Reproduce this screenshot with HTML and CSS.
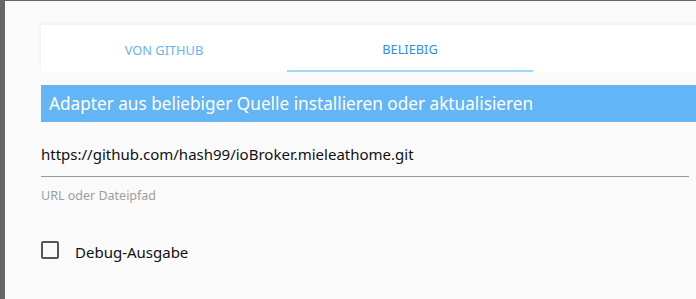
FILE: index.html
```html
<!DOCTYPE html>
<html lang="de">
<head>
    <meta charset="UTF-8">
    <meta name="viewport" content="width=device-width, initial-scale=1.0">
    <title>Adapter installieren</title>
    <link rel="stylesheet" href="styles.css">
</head>
<body>
    <div class="dialog">
        <div class="tabs">
            <div class="tab">Von GitHub</div>
            <div class="tab active">Beliebig</div>
        </div>
        <div class="title">Adapter aus beliebiger Quelle installieren oder aktualisieren</div>
        <div class="field">
            <div class="field-input">https://github.com/hash99/ioBroker.mieleathome.git</div>
            <div class="field-help">URL oder Dateipfad</div>
        </div>
        <label class="check">
            <span class="check-box"></span>
            <span class="check-label">Debug-Ausgabe</span>
        </label>
    </div>
</body>
</html>
```

FILE: styles.css
```css
html, body {
    height: 100%;
}
body {
    margin: 0;
    padding: 1px 0 0 5px;
    box-sizing: border-box;
    background: #666;
    font-family: "Noto Sans", "Open Sans", sans-serif;
    overflow: hidden;
}
.dialog {
    background: #fafafa;
    height: 100%;
    padding: 24px 0 0 36px;
    box-sizing: border-box;
}
.tabs {
    display: flex;
    background: #fff;
    height: 47px;
    box-shadow: 0 -1px 4px rgba(0, 0, 0, 0.06);
}
.tab {
    width: 246px;
    display: flex;
    align-items: center;
    justify-content: center;
    text-transform: uppercase;
    font-size: 12.8px;
    color: #64b5f6;
    box-sizing: border-box;
    padding-top: 3px;
}
.tab.active {
    color: #2f8ff0;
    border-bottom: 2px solid #a6d3f8;
}
.title {
    margin-top: 13px;
    background: #64b5f6;
    color: #fff;
    height: 37px;
    line-height: 37px;
    padding-left: 8px;
    font-size: 17.2px;
}
.field {
    margin-top: 18px;
    margin-right: 7px;
}
.field-input {
    font-size: 15px;
    color: #111;
    height: 36px;
    line-height: 28px;
    border-bottom: 1px solid #999;
}
.field-help {
    font-size: 12.5px;
    color: #9e9e9e;
    margin-top: 10px;
}
.check {
    display: flex;
    align-items: center;
    margin-top: 34px;
}
.check-box {
    width: 14px;
    height: 14px;
    border: 2px solid #555;
    border-radius: 2px;
}
.check-label {
    margin-left: 16px;
    font-size: 15px;
    color: #111;
    padding-top: 4px;
}
```
